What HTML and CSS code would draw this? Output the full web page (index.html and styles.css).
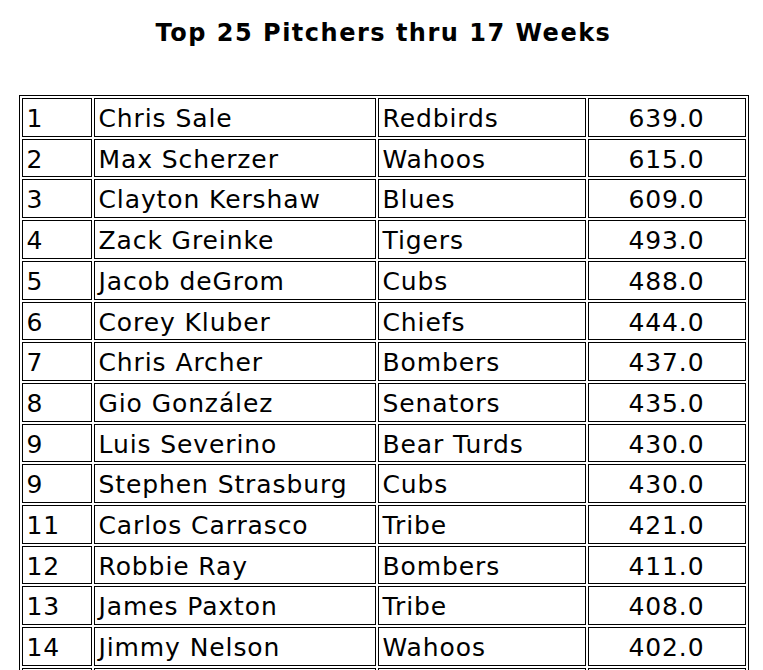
FILE: index.html
```html
<!DOCTYPE html>
<html>
<head>
<meta charset="utf-8">
<title>Top 25 Pitchers</title>
<link rel="stylesheet" href="styles.css">
</head>
<body>
<h1 class="title">Top 25 Pitchers thru 17 Weeks</h1>
<table class="stats">
<colgroup>
<col class="c-rank"><col class="c-name"><col class="c-team"><col class="c-pts">
</colgroup>
<tbody>
<tr><td>1</td><td>Chris Sale</td><td>Redbirds</td><td class="pts">639.0</td></tr>
<tr><td>2</td><td>Max Scherzer</td><td>Wahoos</td><td class="pts">615.0</td></tr>
<tr><td>3</td><td>Clayton Kershaw</td><td>Blues</td><td class="pts">609.0</td></tr>
<tr><td>4</td><td>Zack Greinke</td><td>Tigers</td><td class="pts">493.0</td></tr>
<tr><td>5</td><td>Jacob deGrom</td><td>Cubs</td><td class="pts">488.0</td></tr>
<tr><td>6</td><td>Corey Kluber</td><td>Chiefs</td><td class="pts">444.0</td></tr>
<tr><td>7</td><td>Chris Archer</td><td>Bombers</td><td class="pts">437.0</td></tr>
<tr><td>8</td><td>Gio González</td><td>Senators</td><td class="pts">435.0</td></tr>
<tr><td>9</td><td>Luis Severino</td><td>Bear Turds</td><td class="pts">430.0</td></tr>
<tr><td>9</td><td>Stephen Strasburg</td><td>Cubs</td><td class="pts">430.0</td></tr>
<tr><td>11</td><td>Carlos Carrasco</td><td>Tribe</td><td class="pts">421.0</td></tr>
<tr><td>12</td><td>Robbie Ray</td><td>Bombers</td><td class="pts">411.0</td></tr>
<tr><td>13</td><td>James Paxton</td><td>Tribe</td><td class="pts">408.0</td></tr>
<tr><td>14</td><td>Jimmy Nelson</td><td>Wahoos</td><td class="pts">402.0</td></tr>
<tr class="cut"><td></td><td></td><td></td><td class="pts"></td></tr>
</tbody>
</table>
</body>
</html>
```
FILE: styles.css
```css
html, body {
  background: #ffffff;
}
body {
  margin: 8px 6px 8px 10px;
  font-family: "DejaVu Sans", Verdana, sans-serif;
  color: #000000;
}
.title {
  margin: 10px 0 47px;
  font-size: 24px;
  line-height: 30px;
  font-weight: bold;
  text-align: center;
  letter-spacing: 1.5px;
}
.stats {
  margin: 0 auto;
  width: 730px;
  border: 1px solid #000;
  border-spacing: 2px;
  border-collapse: separate;
  table-layout: fixed;
}
.c-rank { width: 70px; }
.c-name { width: 282px; }
.c-team { width: 208px; }
.c-pts { width: 158px; }
.stats td {
  border: 1px solid #000;
  padding: 3px 4px 0;
  font-size: 25px;
  line-height: 33.7px;
  letter-spacing: 0.9px;
  white-space: nowrap;
  overflow: hidden;
}
.stats td.pts {
  text-align: center;
}
```
